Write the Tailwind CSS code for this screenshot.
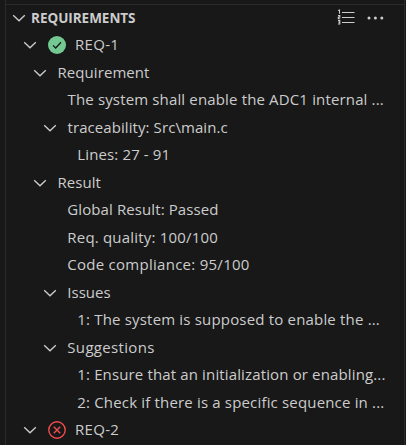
<!DOCTYPE html>
<html lang="en">
<head>
<meta charset="utf-8">
<title>Requirements</title>
<script src="https://cdn.jsdelivr.net/npm/@tailwindcss/browser@4"></script>
</head>
<body class="h-[445px] w-[406px] overflow-hidden bg-[#181818] font-['Open_Sans','Noto_Sans',sans-serif] text-[15px] text-[#cccccc]">
<svg class="hidden">
  <symbol id="chevron" viewBox="0 0 14 8"><path d="M1.2 1.2 7 6.8 12.8 1.2" fill="none" stroke="#cccccc" stroke-width="1.35"/></symbol>
</svg>
<div class="flex h-full w-full pl-[5px] pr-px">
  <section class="h-full w-full border-x border-[#2b2b2b] pt-[4px]">
    <header class="flex h-[27px] items-center border-t border-[#2b2b2b] pl-[6px] pr-[20px]">
      <svg class="h-[8px] w-[14px]"><use href="#chevron"/></svg>
      <h2 class="ml-[5px] pt-[2px] text-[13.5px] font-bold leading-none tracking-[-0.03px]">REQUIREMENTS</h2>
      <svg class="ml-auto h-[18px] w-[18px]" viewBox="0 0 18 18" fill="none" stroke="#cccccc">
        <path d="M5 3.5H17.5M5 8.5H17.5M5 13.5H17.5" stroke-width="1.2"/>
        <path d="M1.2 1.6 2.5 1V4.8M1 6.6H2.8V8.3H1.3V9.8H3.2M1 11.6H2.8V15H1M1.4 13.3H2.8" stroke-width="1.1"/>
      </svg>
      <svg class="ml-[12px] h-[4px] w-[17px]" viewBox="0 0 17 4" fill="#cccccc"><circle cx="2" cy="2" r="1.5"/><circle cx="8.4" cy="2" r="1.5"/><circle cx="14.8" cy="2" r="1.5"/></svg>
    </header>
    <ul class="whitespace-nowrap pt-[0.4px] leading-[27.5px]">
      <li class="flex h-[27.5px] items-center pl-[17px]"><svg class="h-[8px] w-[14px]"><use href="#chevron"/></svg>
        <svg class="ml-[11px] h-[18px] w-[18px]" viewBox="0 0 18 18"><circle cx="9" cy="9" r="9" fill="#73c991"/><path d="M5 9.4 7.7 12 13 6.3" fill="none" stroke="#181818" stroke-width="1.3"/></svg>
        <span class="ml-[9px] tracking-[0.3px]">REQ-1</span></li>
      <li class="flex h-[27.5px] items-center pl-[27px]"><svg class="h-[8px] w-[14px]"><use href="#chevron"/></svg><span class="ml-[10.5px] tracking-[0.07px]">Requirement</span></li>
      <li class="h-[27.5px] pl-[61.5px] tracking-[0.15px]">The system shall enable the ADC1 internal ...</li>
      <li class="flex h-[27.5px] items-center pl-[37px]"><svg class="h-[8px] w-[14px]"><use href="#chevron"/></svg><span class="ml-[10.5px] tracking-[0.08px]">traceability: Src\main.c</span></li>
      <li class="h-[27.5px] pl-[71.3px] tracking-[0.13px]">Lines: 27 - 91</li>
      <li class="flex h-[27.5px] items-center pl-[27px]"><svg class="h-[8px] w-[14px]"><use href="#chevron"/></svg><span class="ml-[10.5px] tracking-[0.03px]">Result</span></li>
      <li class="h-[27.5px] pl-[61.3px] tracking-[0.1px]">Global Result: Passed</li>
      <li class="h-[27.5px] pl-[61.3px] tracking-[0.2px]">Req. quality: 100/100</li>
      <li class="h-[27.5px] pl-[61.3px] tracking-[0.27px]">Code compliance: 95/100</li>
      <li class="flex h-[27.5px] items-center pl-[37px]"><svg class="h-[8px] w-[14px]"><use href="#chevron"/></svg><span class="ml-[10.3px]">Issues</span></li>
      <li class="h-[27.5px] pl-[71.3px] tracking-[0.18px]">1: The system is supposed to enable the ...</li>
      <li class="flex h-[27.5px] items-center pl-[37px]"><svg class="h-[8px] w-[14px]"><use href="#chevron"/></svg><span class="ml-[10.3px] tracking-[0.33px]">Suggestions</span></li>
      <li class="h-[27.5px] pl-[71.3px] tracking-[0.14px]">1: Ensure that an initialization or enabling...</li>
      <li class="h-[27.5px] pl-[71.3px] tracking-[0.17px]">2: Check if there is a specific sequence in ...</li>
      <li class="flex h-[27.5px] items-center pl-[17px]"><svg class="h-[8px] w-[14px]"><use href="#chevron"/></svg>
        <svg class="ml-[11px] h-[18px] w-[18px]" viewBox="0 0 18 18" fill="none" stroke="#f14c4c"><circle cx="9" cy="9" r="8.2" stroke-width="1.4"/><path d="M5.8 5.8 12.2 12.2M12.2 5.8 5.8 12.2" stroke-width="1.4"/></svg>
        <span class="ml-[9px] tracking-[0.3px]">REQ-2</span></li>
    </ul>
  </section>
</div>
</body>
</html>
